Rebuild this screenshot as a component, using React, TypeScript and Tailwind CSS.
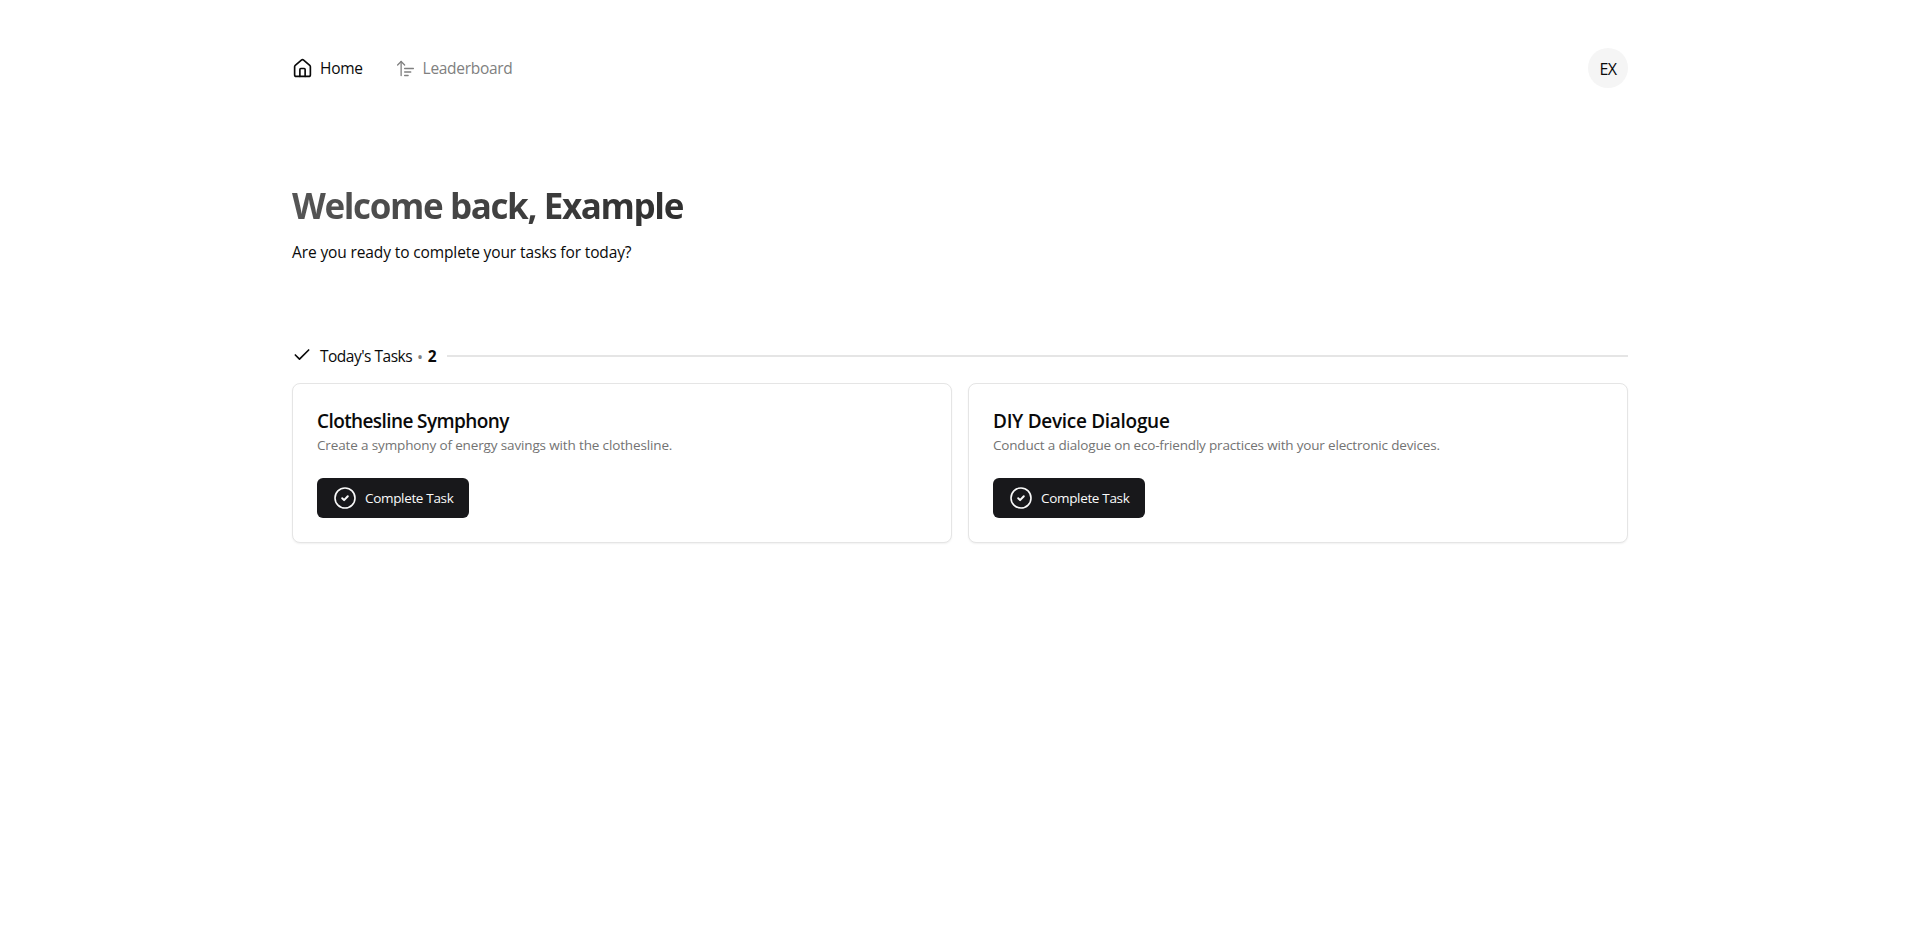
import { Check, House, ArrowUpWideNarrow } from "lucide-react";

function CheckCircleIcon() {
  return (
    <svg width="24" height="24" viewBox="0 0 24 24" fill="none" stroke="currentColor" strokeLinecap="round" strokeLinejoin="round">
      <circle cx="12" cy="12" r="10" strokeWidth="1.6" />
      <path d="M9.2 12.2l1.9 1.9 3.7-3.9" strokeWidth="2" />
    </svg>
  );
}

function TaskCard({ title, text, titleClass, textClass }: { title: string; text: string; titleClass: string; textClass: string }) {
  return (
    <div className="h-[160px] flex-1 rounded-lg border border-[#e5e5e5] bg-white p-6 shadow-[0_1px_2px_rgba(0,0,0,0.06)]">
      <h3 className={`mt-[1px] text-[19px] leading-[24px] font-semibold text-[#0a0a0a] ${titleClass}`}>{title}</h3>
      <p className={`mt-[2px] text-[13.5px] leading-[20px] text-[#737373] ${textClass}`}>{text}</p>
      <button className="mt-[23px] flex h-10 items-center gap-2 rounded-md bg-[#18181b] px-4 text-[13.5px] tracking-[-0.33px] text-[#fafafa]">
        <CheckCircleIcon />
        <span className="mt-[1px]">Complete Task</span>
      </button>
    </div>
  );
}

export default function App() {
  return (
    <div className="min-h-[942px] bg-white font-['Open_Sans','Noto_Sans',sans-serif] text-[#0a0a0a]">
      <div className="mx-auto w-[1336px] pt-12">
        <nav className="flex h-10 items-center justify-between">
          <div className="flex items-center gap-8 text-[15.5px] tracking-[-0.3px]">
            <a className="flex items-center gap-[7px]">
              <House size={21} strokeWidth={1.9} />
              <span className="mt-[2px]">Home</span>
            </a>
            <a className="flex items-center gap-[7px] text-[#808080]">
              <ArrowUpWideNarrow size={21} strokeWidth={1.5} />
              <span className="mt-[2px]">Leaderboard</span>
            </a>
          </div>
          <div className="flex h-10 w-10 items-center justify-center rounded-full bg-[#f5f5f5] pt-[1px] text-[16px] tracking-[-0.5px]">EX</div>
        </nav>

        <section className="mt-[98px]">
          <h1 className="inline-block bg-gradient-to-r from-[#555555] to-[#2f2f2f] bg-clip-text text-[35px] leading-[40px] font-bold tracking-[-1.38px] text-transparent">
            Welcome back, Example
          </h1>
          <p className="mt-[14px] text-[15.5px] leading-[24px] tracking-[-0.12px]">Are you ready to complete your tasks for today?</p>
        </section>

        <section className="mt-[80px]">
          <div className="flex h-[24px] items-center gap-[11px] text-[15.5px] tracking-[-0.5px]">
            <Check size={20} strokeWidth={2} className="-mt-[2px]" />
            <span className="ml-[-3px] mt-[2px] flex items-center gap-[5px]">
              <span>Today's Tasks</span>
              <span className="text-[16px] text-[#808080]">•</span>
              <b className="font-bold">2</b>
            </span>
            <div className="h-[2px] flex-1 bg-[#e5e5e5]" />
          </div>
          <div className="mt-[15px] flex gap-4">
            <TaskCard title="Clothesline Symphony" titleClass="tracking-[-0.6px]" textClass="tracking-[-0.14px]" text="Create a symphony of energy savings with the clothesline." />
            <TaskCard title="DIY Device Dialogue" titleClass="tracking-[-0.3px]" textClass="tracking-[-0.18px]" text="Conduct a dialogue on eco-friendly practices with your electronic devices." />
          </div>
        </section>
      </div>
    </div>
  );
}
